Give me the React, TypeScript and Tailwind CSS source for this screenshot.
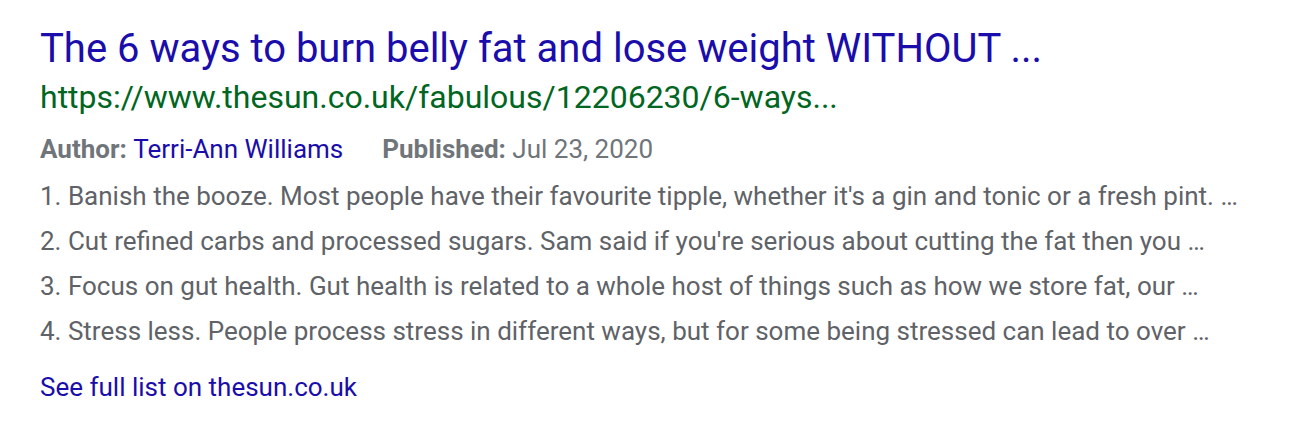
export default function App() {
  const items = [
    "1. Banish the booze. Most people have their favourite tipple, whether it's a gin and tonic or a fresh pint. …",
    "2. Cut refined carbs and processed sugars. Sam said if you're serious about cutting the fat then you …",
    '3. Focus on gut health. Gut health is related to a whole host of things such as how we store fat, our …',
    '4. Stress less. People process stress in different ways, but for some being stressed can lead to over …',
  ]

  return (
    <div
      className="w-[1296px] h-[430px] bg-white px-[40px] pt-[25px]"
      style={{ fontFamily: 'Roboto, "Liberation Sans", sans-serif' }}
    >
      <h3 className="text-[40px] leading-[48px] text-[#1a0dab]">
        The 6 ways to burn belly fat and lose weight WITHOUT ...
      </h3>
      <div className="text-[32px] leading-[48px] text-[#006621]">
        https://www.thesun.co.uk/fabulous/12206230/6-ways...
      </div>
      <div className="flex text-[26px] leading-[40px] mt-[8px] text-[#70757a]">
        <span>
          <span className="font-bold">Author: </span>
          <span className="text-[#1a0dab]">Terri-Ann Williams</span>
        </span>
        <span className="ml-[39px]">
          <span className="font-bold">Published: </span>
          <span>Jul 23, 2020</span>
        </span>
      </div>
      <ul className="text-[26px] leading-[45px] text-[#5f6368] mt-[5px]">
        {items.map((item, i) => (
          <li key={i}>{item}</li>
        ))}
      </ul>
      <div className="text-[26px] leading-[40px] text-[#1a0dab] mt-[13px]">
        See full list on thesun.co.uk
      </div>
    </div>
  )
}
